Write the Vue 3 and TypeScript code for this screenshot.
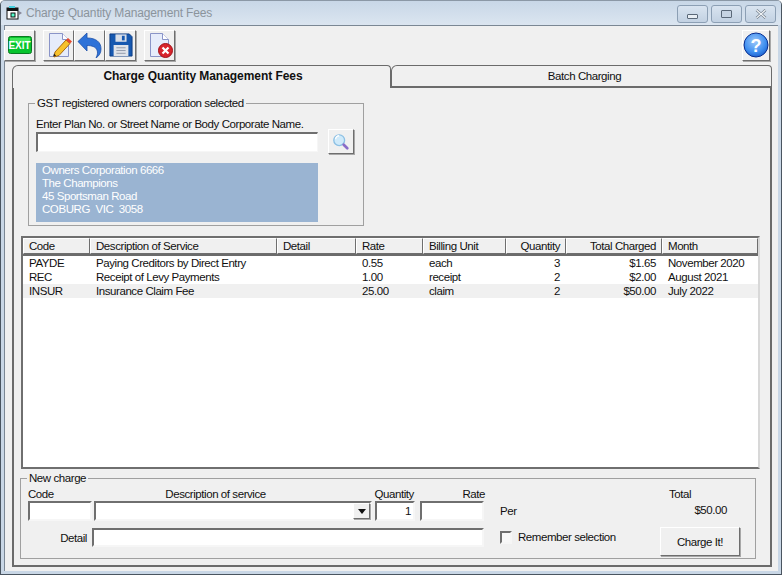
<script setup lang="ts">
interface Row { code: string; desc: string; detail: string; rate: string; unit: string; qty: string; total: string; month: string; alt?: boolean }
const rows: Row[] = [
  { code: 'PAYDE', desc: 'Paying Creditors by Direct Entry', detail: '', rate: '0.55', unit: 'each', qty: '3', total: '$1.65', month: 'November 2020' },
  { code: 'REC', desc: 'Receipt of Levy Payments', detail: '', rate: '1.00', unit: 'receipt', qty: '2', total: '$2.00', month: 'August 2021' },
  { code: 'INSUR', desc: 'Insurance Claim Fee', detail: '', rate: '25.00', unit: 'claim', qty: '2', total: '$50.00', month: 'July 2022', alt: true },
]
const address = ['Owners Corporation 6666', 'The Champions', '45 Sportsman Road', 'COBURG  VIC  3058']
</script>

<template>
  <div class="window">
    <div class="titlebar">
      <svg class="appicon" width="16" height="16" viewBox="0 0 16 16">
        <rect x="1" y="3" width="11" height="11" fill="#fff" stroke="#111" />
        <rect x="1" y="3" width="11" height="3" fill="#111" />
        <rect x="5" y="8" width="4" height="4" fill="#5fc" stroke="#111" />
        <path d="M13 6l3 2-3 2z" fill="#889" />
        <path d="M3 1h6v2H3z" fill="#4cd" />
      </svg>
      <span class="title">Charge Quantity Management Fees</span>
      <div class="winbtns">
        <div class="winbtn"><i class="glyph-min"></i></div>
        <div class="winbtn"><i class="glyph-max"></i></div>
        <div class="winbtn">
          <svg width="12" height="10" viewBox="0 0 12 10"><path d="M1.5 1l9 8M10.5 1l-9 8" stroke="#6a7684" stroke-width="2.4" fill="none" /><path d="M1.5 1l9 8M10.5 1l-9 8" stroke="#f2f5f8" stroke-width="1.2" fill="none" /></svg>
        </div>
      </div>
    </div>

    <div class="client">
      <div class="toolbar">
        <button class="tool">
          <svg width="24" height="18" viewBox="0 0 24 18">
            <rect x="0.5" y="0.5" width="23" height="17" rx="2" fill="#08c42e" stroke="#0a7a22" />
            <rect x="2" y="2" width="20" height="5" fill="#3fe65a" />
          </svg>
          <span class="exit">EXIT</span>
        </button>
        <button class="tool gap">
          <svg width="26" height="26" viewBox="0 0 26 26">
            <path d="M3.5 1.5h13l6 6v17h-19z" fill="#e6ecfb" stroke="#8a94c8" />
            <path d="M16.5 1.5v6h6" fill="#fff" stroke="#8a94c8" />
            <path d="M9 20l11-12 4 3.500-11 12-5 1.500z" fill="#f7c22c" stroke="#a86a10" />
            <path d="M20 8l2-2 4 3.500-2 2z" fill="#e8482c" />
            <path d="M8 21.500l-.8 3 3-.8z" fill="#222" />
          </svg>
        </button>
        <button class="tool">
          <svg width="26" height="26" viewBox="0 0 26 26">
            <path d="M1 9.500L10 1v5c9 0 14 4 14 11 0 4-2 7-5 9 1.500-3 2-5.500 1-8-1-3-5-4.500-10-4.500V19z" fill="#2e72d8" stroke="#1c4fa8" stroke-width=".8" />
          </svg>
        </button>
        <button class="tool">
          <svg width="24" height="24" viewBox="0 0 26 26">
            <path d="M1 1h21l3 3v21H1z" fill="#1658b0" stroke="#0c3a80" />
            <rect x="7" y="1.500" width="12" height="8" fill="#d8dee8" />
            <rect x="14" y="3" width="3" height="5" fill="#1658b0" />
            <rect x="5" y="13" width="16" height="12" fill="#dfe3ea" />
            <path d="M8 16h10M8 19h10M8 22h10" stroke="#8d96a6" />
          </svg>
        </button>
        <button class="tool gap">
          <svg width="26" height="26" viewBox="0 0 26 26">
            <path d="M3.500 1.500h12l6 6v17h-18z" fill="#e6ecfb" stroke="#8a94c8" />
            <path d="M15.500 1.500v6h6" fill="#fff" stroke="#8a94c8" />
            <circle cx="18.500" cy="18.500" r="7" fill="#d8242c" stroke="#a01018" />
            <path d="M15.500 15.500l6 6M21.500 15.500l-6 6" stroke="#fff" stroke-width="2.200" />
          </svg>
        </button>
        <button class="tool help">
          <svg width="26" height="26" viewBox="0 0 26 26">
            <defs><radialGradient id="hb" cx=".45" cy=".35" r=".75"><stop offset="0" stop-color="#9cc8fa" /><stop offset=".6" stop-color="#3f8ff0" /><stop offset="1" stop-color="#0f4fc0" /></radialGradient></defs>
            <circle cx="13" cy="13" r="12" fill="url(#hb)" stroke="#0a2f90" />
            <text x="13" y="20" text-anchor="middle" class="qmark">?</text>
          </svg>
        </button>
      </div>

      <div class="tabs">
        <div class="tab active">Charge Quantity Management Fees</div>
        <div class="tab">Batch Charging</div>
      </div>

      <div class="panel">
        <fieldset class="group gst">
          <legend>GST registered owners corporation selected</legend>
          <div class="gst-label">Enter Plan No. or Street Name or Body Corporate Name.</div>
          <div class="gst-search">
            <div class="sunken search-input"></div>
            <button class="raised search-btn">
              <svg width="18" height="18" viewBox="0 0 20 20">
                <circle cx="8" cy="8" r="6" fill="#cfeafa" stroke="#8cc0e4" stroke-width="1.500" />
                <path d="M4 7a4 4 0 0 1 4-4" stroke="#fff" stroke-width="1.500" fill="none" />
                <path d="M13 13l4 4" stroke="#8a6cc8" stroke-width="3" stroke-linecap="round" />
              </svg>
            </button>
          </div>
          <div class="address">
            <div v-for="l in address" :key="l">{{ l }}</div>
          </div>
        </fieldset>

        <div class="list">
          <div class="row head">
            <div class="c code">Code</div>
            <div class="c desc">Description of Service</div>
            <div class="c detail">Detail</div>
            <div class="c rate">Rate</div>
            <div class="c unit">Billing Unit</div>
            <div class="c qty num">Quantity</div>
            <div class="c total num">Total Charged</div>
            <div class="c month">Month</div>
          </div>
          <div class="rows">
            <div v-for="r in rows" :key="r.code" class="row data" :class="{ alt: r.alt }">
              <div class="c code">{{ r.code }}</div>
              <div class="c desc">{{ r.desc }}</div>
              <div class="c detail">{{ r.detail }}</div>
              <div class="c rate">{{ r.rate }}</div>
              <div class="c unit">{{ r.unit }}</div>
              <div class="c qty num">{{ r.qty }}</div>
              <div class="c total num">{{ r.total }}</div>
              <div class="c month">{{ r.month }}</div>
            </div>
          </div>
        </div>

        <fieldset class="group charge">
          <legend>New charge</legend>
          <div class="charge-grid">
            <div class="charge-left">
              <div class="labels">
                <span class="l-code">Code</span>
                <span class="l-desc">Description of service</span>
                <span class="l-qty">Quantity</span>
                <span class="l-rate">Rate</span>
              </div>
              <div class="fields">
                <div class="sunken f-code"></div>
                <div class="sunken f-desc"><span class="raised drop"><i></i></span></div>
                <div class="sunken f-qty">1</div>
                <div class="sunken f-rate"></div>
              </div>
              <div class="detail-row">
                <span class="l-detail">Detail</span>
                <div class="sunken f-detail"></div>
              </div>
            </div>
            <div class="charge-mid">
              <div class="per">Per</div>
              <label class="remember"><span class="sunken check"></span>Remember selection</label>
            </div>
            <div class="charge-right">
              <div class="l-total">Total</div>
              <div class="v-total">$50.00</div>
              <button class="raised charge-btn">Charge It!</button>
            </div>
          </div>
        </fieldset>
      </div>
    </div>
  </div>
</template>

<style>
html, body { margin: 0; background: #fff; }
</style>

<style scoped>
* { box-sizing: border-box; }
.window {
  width: 782px; height: 575px;
  border: 1px solid #4a5560; border-top-color: #8b98a6;
  border-radius: 5px 5px 0 0;
  background: #c9d7e6;
  padding: 0 3px 3px;
  display: flex; flex-direction: column;
  font: 11.5px/14px "Liberation Sans", Arial, sans-serif;
  letter-spacing: -0.43px;
  color: #111;
  overflow: hidden;
}
.titlebar {
  height: 24px; flex: none;
  display: flex; align-items: center;
  background: linear-gradient(#c8d7e7, #dbe5f0);
  margin: 0 -3px; padding: 0 5px 0 5px;
}
.appicon { flex: none; }
.title { margin-left: 4px; color: #8b949c; font-size: 12px; letter-spacing: -0.15px; }
.winbtns { margin-left: auto; display: flex; gap: 3px; margin-top: 2px; }
.winbtn {
  width: 31px; height: 18px;
  border: 1px solid #8c9fb4; border-radius: 3px;
  background: linear-gradient(#d9e4f0, #c2d1e2);
  display: flex; align-items: center; justify-content: center;
}
.glyph-min { width: 11px; height: 5px; margin-top: 4px; border: 1px solid #5a6878; background: #e8eef4; border-radius: 1px; }
.glyph-max { width: 11px; height: 8px; border: 1px solid #5a6878; background: #c6d3e2; border-radius: 1px; }
.client {
  flex: 1; min-height: 0;
  background: #f0f0f0;
  border-top: 1px solid #7b8794;
  border-left: 1px solid #7b8794;
  padding: 0 6px 4px 7px;
  display: flex; flex-direction: column;
}
.toolbar { height: 38px; flex: none; display: flex; align-items: center; margin-left: -8px; }
.tool {
  position: relative;
  width: 31px; height: 31px; padding: 0;
  background: #f0f0f0;
  border: 1px solid; border-color: #fff #6e6e6e #6e6e6e #fff;
  box-shadow: 1px 1px 0 #a8a8a8;
  display: flex; align-items: center; justify-content: center;
}
.exit {
  position: absolute; inset: 0;
  display: flex; align-items: center; justify-content: center;
  color: #fff; font: bold 10px "Liberation Sans", sans-serif; letter-spacing: 0;
}
.gap { margin-left: 8px; }
.help { margin-left: auto; margin-right: 2px; width: 28px; }
.qmark { font: bold 18px "Liberation Sans", sans-serif; fill: #fff; }
.tabs { display: flex; height: 23px; flex: none; margin-top: 1px; }
.tab {
  border: 1px solid #6b6b6b; border-bottom: 0;
  border-radius: 6px 4px 0 0;
  text-align: center; padding: 3px 0 0 6px;
  width: 381px; background: #f0f0f0;
  border-bottom: 2px solid #6b6b6b;
}
.tab.active {
  width: 379px; font-size: 12px; font-weight: bold; letter-spacing: -0.05px;
  padding-left: 3px;
  background: #f0f0f0; border-bottom: 0; position: relative; z-index: 1;
}
.panel {
  flex: 1; min-height: 0;
  margin-top: -2px; width: 760px;
  border: 2px solid #6b6b6b;
  padding: 15px 0 0 7px;
  display: flex; flex-direction: column;
}
.group {
  margin: 0; padding: 0;
  border: 1px solid #a0a0a0;
}
.group legend { padding: 0 2px; margin-left: -1px; line-height: 14px; }
.gst { width: 336px; height: 130px; margin-left: 7px; padding: 0 0 0 7px; margin-top: -7px; }
.gst-label { margin-top: 7px; }
.gst-search { display: flex; align-items: center; margin-top: -2px; }
.sunken {
  background: #fff;
  border: 2px solid; border-color: #6f6f6f #f6f6f6 #f6f6f6 #6f6f6f;
}
.raised {
  background: #f0f0f0; padding: 0;
  border: 1px solid; border-color: #fff #6e6e6e #6e6e6e #fff;
  box-shadow: 1px 1px 0 #a8a8a8;
}
.search-input { width: 282px; height: 20px; border-width: 1px; border-top-width: 2px; border-left-width: 2px; }
.search-btn { width: 26px; height: 25px; margin-left: 10px; display: flex; align-items: center; justify-content: center; }
.address {
  width: 282px; height: 59px; margin-top: 9px;
  background: #9ab4d2; color: #fff; padding: 1px 0 0 6px;
  line-height: 13px; white-space: pre;
}
.list {
  width: 739px; height: 233px; margin-top: 10px;
  background: #fff;
  border: 2px solid; border-color: #6f6f6f #d8d8d8 #6f6f6f #6f6f6f;
  display: flex; flex-direction: column; flex: none;
}
.row { display: flex; }
.head { height: 18px; background: #f0f0f0; border-bottom: 2px solid #6b6b6b; flex: none; }
.head .c {
  line-height: 15px; border: 1px solid; border-color: #fff #6e6e6e #6e6e6e #fff;
  padding-left: 5px;
}
.head .c.num { padding-right: 5px; padding-left: 0; }
.data { height: 14px; line-height: 14px; }
.data .c { padding-left: 6px; }
.data .c.num { padding-left: 0; padding-right: 6px; }
.alt { background: #f0f0f0; }
.c { flex: none; white-space: nowrap; overflow: hidden; }
.num { text-align: right; }
.code { width: 67px; }
.desc { width: 187px; }
.detail { width: 79px; }
.rate { width: 67px; }
.unit { width: 83px; }
.qty { width: 60px; }
.total { width: 96px; }
.month { width: 96px; }
.charge { width: 736px; height: 88px; margin-top: 2px; margin-left: -1px; padding: 0 0 0 7px; }
.charge-grid { display: flex; }
.charge-left { width: 457px; }
.labels { display: flex; height: 14px; margin-top: 2px; }
.l-code { width: 64px; }
.l-desc { width: 282px; text-align: center; padding-right: 34px; }
.l-qty { width: 42px; text-align: center; }
.l-rate { width: 70px; text-align: right; }
.fields { display: flex; height: 20px; }
.f-code { width: 64px; }
.f-desc { width: 278px; margin-left: 2px; display: flex; justify-content: flex-end; align-items: center; }
.drop { width: 17px; height: 16px; display: flex; align-items: center; justify-content: center; }
.drop i { width: 0; height: 0; border: 4px solid transparent; border-top: 5px solid #111; border-bottom: 0; }
.f-qty { width: 40px; margin-left: 3px; text-align: right; padding-right: 2px; line-height: 16px; }
.f-rate { width: 64px; margin-left: 5px; }
.detail-row { display: flex; align-items: center; margin-top: 7px; }
.l-detail { width: 59px; text-align: right; margin-right: 5px; }
.f-detail { width: 392px; height: 19px; }
.charge-mid { width: 160px; margin-left: 15px; }
.per { margin-top: 19px; }
.remember { display: flex; align-items: center; margin-top: 12px; }
.check { width: 12px; height: 13px; margin-right: 6px; flex: none; background: #f8f8f8; }
.charge-right { width: 80px; display: flex; flex-direction: column; }
.l-total { margin-top: 2px; padding-left: 9px; }
.v-total { margin-top: 2px; text-align: right; padding-right: 13px; }
.charge-btn {
  width: 80px; height: 29px; margin-top: 10px;
  font: inherit; letter-spacing: inherit; color: inherit;
}
</style>
